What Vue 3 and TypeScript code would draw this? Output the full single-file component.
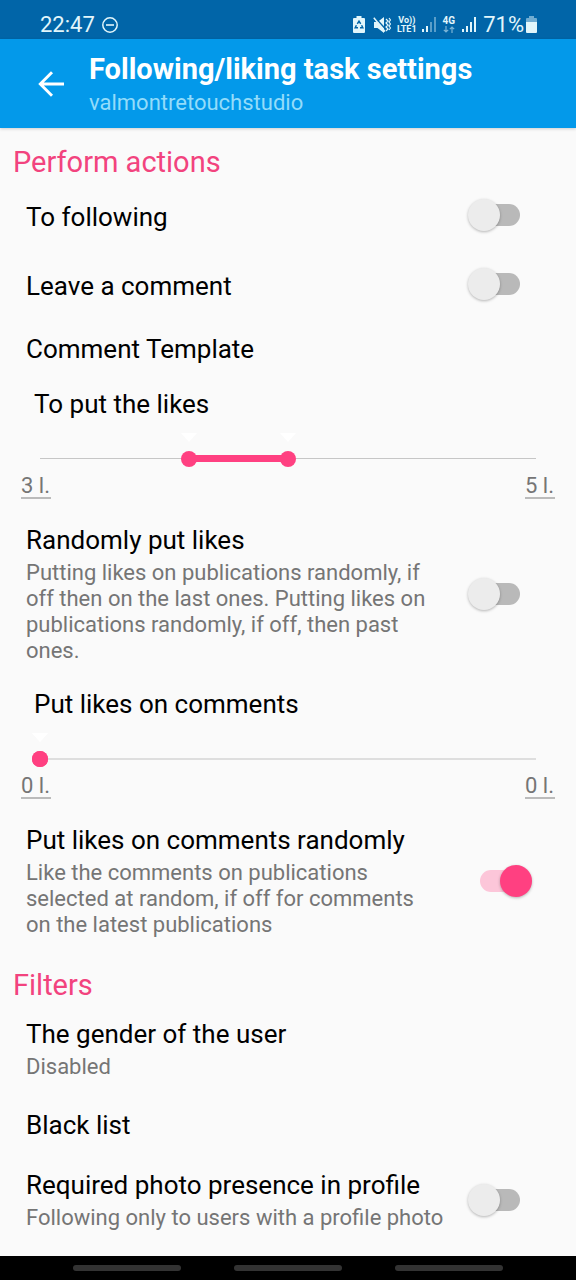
<script setup lang="ts">
import { reactive } from 'vue'

interface TextRow { kind: 'text'; title: string; summary?: string }
interface SwitchRow { kind: 'switch'; id: string; title: string; summary?: string; on: boolean }
interface RangeRow { kind: 'range'; id: string; title: string; low: number; high: number; max: number; empty?: boolean }
type Row = TextRow | SwitchRow | RangeRow
interface Section { title: string; rows: Row[] }

const sections = reactive<Section[]>([
  {
    title: 'Perform actions',
    rows: [
      { kind: 'switch', id: 'following', title: 'To following', on: false },
      { kind: 'switch', id: 'comment', title: 'Leave a comment', on: false },
      { kind: 'text', title: 'Comment Template' },
      { kind: 'range', id: 'likes', title: 'To put the likes', low: 3, high: 5, max: 10 },
      {
        kind: 'switch',
        id: 'random-likes',
        title: 'Randomly put likes',
        summary:
          'Putting likes on publications randomly, if off then on the last ones. Putting likes on publications randomly, if off, then past ones.',
        on: false,
      },
      { kind: 'range', id: 'comment-likes', title: 'Put likes on comments', low: 0, high: 0, max: 10, empty: true },
      {
        kind: 'switch',
        id: 'random-comments',
        title: 'Put likes on comments randomly',
        summary: 'Like the comments on publications selected at random, if off for comments\non the latest publications',
        on: true,
      },
    ],
  },
  {
    title: 'Filters',
    rows: [
      { kind: 'text', title: 'The gender of the user', summary: 'Disabled' },
      { kind: 'text', title: 'Black list' },
      {
        kind: 'switch',
        id: 'photo',
        title: 'Required photo presence in profile',
        summary: 'Following only to users with a profile photo',
        on: false,
      },
    ],
  },
])

const percent = (value: number, max: number) => `${(value / max) * 100}%`
</script>

<template>
  <div class="screen">
    <div class="status">
      <span class="clock">22:47</span>
      <svg class="dnd" viewBox="0 0 18 18" width="18" height="18" aria-hidden="true">
        <circle cx="9" cy="9" r="7.2" fill="none" stroke="currentColor" stroke-width="1.5" />
        <path d="M5 9h8" stroke="currentColor" stroke-width="1.6" />
      </svg>
      <div class="indicators">
        <svg viewBox="0 0 12 17" width="12" height="17" aria-hidden="true">
          <path d="M3.5 0h5v2H11a1 1 0 0 1 1 1v13a1 1 0 0 1-1 1H1a1 1 0 0 1-1-1V3a1 1 0 0 1 1-1h2.500z" fill="currentColor" />
          <path d="M4.300 7.800 6 5.200l1.700 2.600M8.600 9.200l1.200 2.500H7M5 11.700H2.200l1.200-2.500" fill="none" stroke="#0165a8" stroke-width="1.500" />
        </svg>
        <svg class="mute" viewBox="0 0 18 18" width="18" height="18" aria-hidden="true">
          <path d="M1 6h3.500L11 1v16l-6.500-5H1z" fill="currentColor" />
          <path d="M2 1.500 13 13.500" stroke="#0165a8" stroke-width="1.500" />
          <path d="M.8 1.800 12 15.500" stroke="currentColor" stroke-width="1.500" />
          <path d="m13 3 2 2-2 2 2 2-2 2 2 2-2 2M16 2l1.500 2L16 6l1.500 2L16 10l1.500 2L16 14" fill="none" stroke="currentColor" stroke-width="1.200" />
        </svg>
        <span class="volte"><span>Vo))</span><span>LTE1</span></span>
        <svg class="signal" viewBox="0 0 15 15" width="15" height="15" aria-hidden="true">
          <path d="M0 12h2v3H0zM4 9h2v6H4z" fill="currentColor" />
          <path d="M8 5h2v10H8zM12 0h2v15h-2z" fill="currentColor" opacity=".4" />
        </svg>
        <span class="network">
          <span>4G</span>
          <svg viewBox="0 0 12 7" width="12" height="7" aria-hidden="true">
            <path d="M3 0v6M.8 3.800 3 6l2.200-2.200M9 7V1M6.800 3.200 9 1l2.200 2.200" fill="none" stroke="currentColor" stroke-width="1.200" opacity=".55" />
          </svg>
        </span>
        <svg class="signal" viewBox="0 0 15 15" width="15" height="15" aria-hidden="true">
          <path d="M0 12h2v3H0zM4 9h2v6H4zM8 5h2v10H8zM12 0h2v15h-2z" fill="currentColor" />
        </svg>
        <span class="charge">71%</span>
        <svg class="battery" viewBox="0 0 11 17" width="11" height="17" aria-hidden="true">
          <path d="M3 0h5v2h2a1 1 0 0 1 1 1v3H0V3a1 1 0 0 1 1-1h2z" fill="currentColor" opacity=".5" />
          <path d="M0 6h11v10a1 1 0 0 1-1 1H1a1 1 0 0 1-1-1z" fill="currentColor" />
        </svg>
      </div>
    </div>

    <header class="appbar">
      <button class="back" type="button" aria-label="Back">
        <svg viewBox="0 0 26 26" width="26" height="26" aria-hidden="true">
          <path d="M26 13H2.500M14 1.300 2.300 13 14 24.700" fill="none" stroke="currentColor" stroke-width="2.900" />
        </svg>
      </button>
      <div class="heading">
        <h1>Following/liking task settings</h1>
        <p>valmontretouchstudio</p>
      </div>
    </header>

    <main class="content">
      <section v-for="section in sections" :key="section.title">
        <h2>{{ section.title }}</h2>
        <template v-for="row in section.rows" :key="row.title">
          <label v-if="row.kind === 'switch'" class="row" :class="{ single: !row.summary }" :for="row.id">
            <span class="texts">
              <span class="title">{{ row.title }}</span>
              <span v-if="row.summary" class="summary">{{ row.summary }}</span>
            </span>
            <input :id="row.id" v-model="row.on" class="switch" type="checkbox" role="switch" />
          </label>

          <div v-else-if="row.kind === 'text'" class="row">
            <span class="texts">
              <span class="title">{{ row.title }}</span>
              <span v-if="row.summary" class="summary">{{ row.summary }}</span>
            </span>
          </div>

          <div v-else class="range" role="group" :aria-label="row.title">
            <span class="title">{{ row.title }}</span>
            <div class="slider" :class="{ empty: row.empty }">
              <div class="track">
                <div class="fill" :style="{ left: percent(row.low, row.max), width: percent(row.high - row.low, row.max) }"></div>
                <i class="pin" :style="{ left: percent(row.low, row.max) }"></i>
                <i class="pin" :style="{ left: percent(row.high, row.max) }"></i>
              </div>
              <input v-model.number="row.low" type="range" min="0" :max="row.max" :aria-label="row.title + ', from'" />
              <input v-model.number="row.high" type="range" min="0" :max="row.max" :aria-label="row.title + ', to'" />
            </div>
            <div class="values">
              <input type="text" :value="row.low + ' l.'" :aria-label="row.title + ', lowest value'" />
              <input type="text" :value="row.high + ' l.'" :aria-label="row.title + ', highest value'" />
            </div>
          </div>
        </template>
      </section>
    </main>

    <nav class="navbar" aria-label="System">
      <button type="button" aria-label="Recent apps"></button>
      <button type="button" aria-label="Home"></button>
      <button type="button" aria-label="Go back"></button>
    </nav>
  </div>
</template>

<style>
body {
  margin: 0;
  background: #fafafa;
}
</style>

<style scoped>
.screen {
  display: flex;
  flex-direction: column;
  min-height: 100vh;
  font-family: Roboto, "Liberation Sans", sans-serif;
  background: #fafafa;
  color: #000;
}

.status {
  display: flex;
  align-items: center;
  height: 39px;
  box-sizing: border-box;
  padding: 10px 39px 0 40px;
  background: #0165a8;
  color: #e2f6fb;
}

.clock,
.charge {
  font-size: 22px;
  line-height: 28px;
}

.dnd {
  margin-left: 6px;
}

.indicators {
  display: flex;
  align-items: center;
  margin-left: auto;
}

.mute {
  margin-left: 8px;
}

.volte,
.network {
  display: flex;
  flex-direction: column;
  align-items: center;
  font-size: 9px;
  line-height: 9px;
  font-weight: 700;
}

.volte {
  margin-left: 6px;
}

.signal {
  margin-left: 5px;
}

.network {
  margin-left: 6px;
  font-size: 10px;
}

.network svg {
  margin-top: 1px;
}

.network + .signal {
  margin-left: 7px;
}

.charge {
  margin-left: 6px;
}

.battery {
  margin-left: 2px;
}

.appbar {
  display: flex;
  align-items: center;
  height: 89px;
  background: #0399ea;
  color: #fff;
  box-shadow: 0 1px 3px rgba(0, 0, 0, 0.18);
}

.back {
  display: flex;
  margin-left: 38px;
  padding: 0;
  border: 0;
  background: none;
  color: #fff;
}

.heading {
  margin-left: 25px;
  padding-top: 5px;
}

h1 {
  margin: 0;
  font-size: 29px;
  line-height: 34px;
  font-weight: 700;
}

.heading p {
  margin: 0;
  font-size: 22px;
  line-height: 34px;
  color: #93dcfa;
}

.content {
  flex: 1;
  padding: 2px 0 10px;
}

h2 {
  margin: 0;
  padding: 15px 13px 2px;
  font-size: 29px;
  line-height: 34px;
  font-weight: 400;
  color: #f2437e;
}

.row {
  display: flex;
  align-items: center;
  gap: 18px;
  padding: 15px 44px 15px 26px;
}

.row.single {
  padding-top: 18px;
  padding-bottom: 18px;
}

.texts {
  display: flex;
  flex: 1;
  flex-direction: column;
  gap: 5px;
}

.single .texts {
  padding-top: 3px;
}

.title {
  font-size: 26px;
  line-height: 30px;
}

.summary {
  font-size: 22px;
  line-height: 26px;
  white-space: pre-line;
  color: #757575;
}

.switch {
  appearance: none;
  position: relative;
  flex: none;
  width: 64px;
  height: 32px;
  margin: 0 0 2px;
}

.single .switch {
  margin-bottom: 1px;
}

.switch::before {
  content: "";
  position: absolute;
  inset: 5px 12px;
  border-radius: 11px;
  background: #b9b9b9;
}

.switch::after {
  content: "";
  position: absolute;
  top: 0;
  left: 0;
  width: 32px;
  height: 32px;
  border-radius: 50%;
  background: #ececec;
  box-shadow: 0 1px 3px rgba(0, 0, 0, 0.28);
}

.switch:checked::before {
  background: #fcc6d9;
}

.switch:checked::after {
  left: 32px;
  background: #ff4081;
}

.range {
  padding: 10px 0 11px;
}

.range .title {
  display: block;
  padding-left: 34px;
}

.slider {
  position: relative;
  height: 48px;
  margin: 6px 32px 0;
  padding: 0 8px;
  display: flex;
  align-items: center;
}

.track {
  position: relative;
  flex: 1;
  height: 1px;
  margin-top: 19px;
  background: #c6c6c6;
}

.empty .track {
  height: 2px;
  background: #dedede;
}

.fill {
  position: absolute;
  top: -3px;
  height: 7px;
  background: #ff4081;
}

.empty .fill {
  display: none;
}

.pin {
  position: absolute;
  top: -25px;
  margin-left: -8px;
  border: 8px solid transparent;
  border-top: 9px solid #fff;
  border-bottom: 0;
}

.slider input {
  appearance: none;
  position: absolute;
  inset: 25px 0 6px;
  width: 100%;
  margin: 0;
  background: none;
  pointer-events: none;
}

.slider input::-webkit-slider-thumb {
  appearance: none;
  width: 16px;
  height: 16px;
  border: 0;
  border-radius: 50%;
  background: #ff4081;
  pointer-events: auto;
}

.values {
  display: flex;
  justify-content: space-between;
  padding: 0 21px;
}

.values input {
  box-sizing: border-box;
  width: 30px;
  height: 26px;
  padding: 0;
  border: 0;
  border-bottom: 2px solid #bbb;
  background: none;
  font: 22px/24px Roboto, "Liberation Sans", sans-serif;
  color: #757575;
}

.navbar {
  display: flex;
  align-items: center;
  justify-content: center;
  gap: 53px;
  height: 24px;
  background: #000;
}

.navbar button {
  width: 108px;
  height: 6px;
  padding: 0;
  border: 0;
  border-radius: 3px;
  background: #333;
}
</style>
